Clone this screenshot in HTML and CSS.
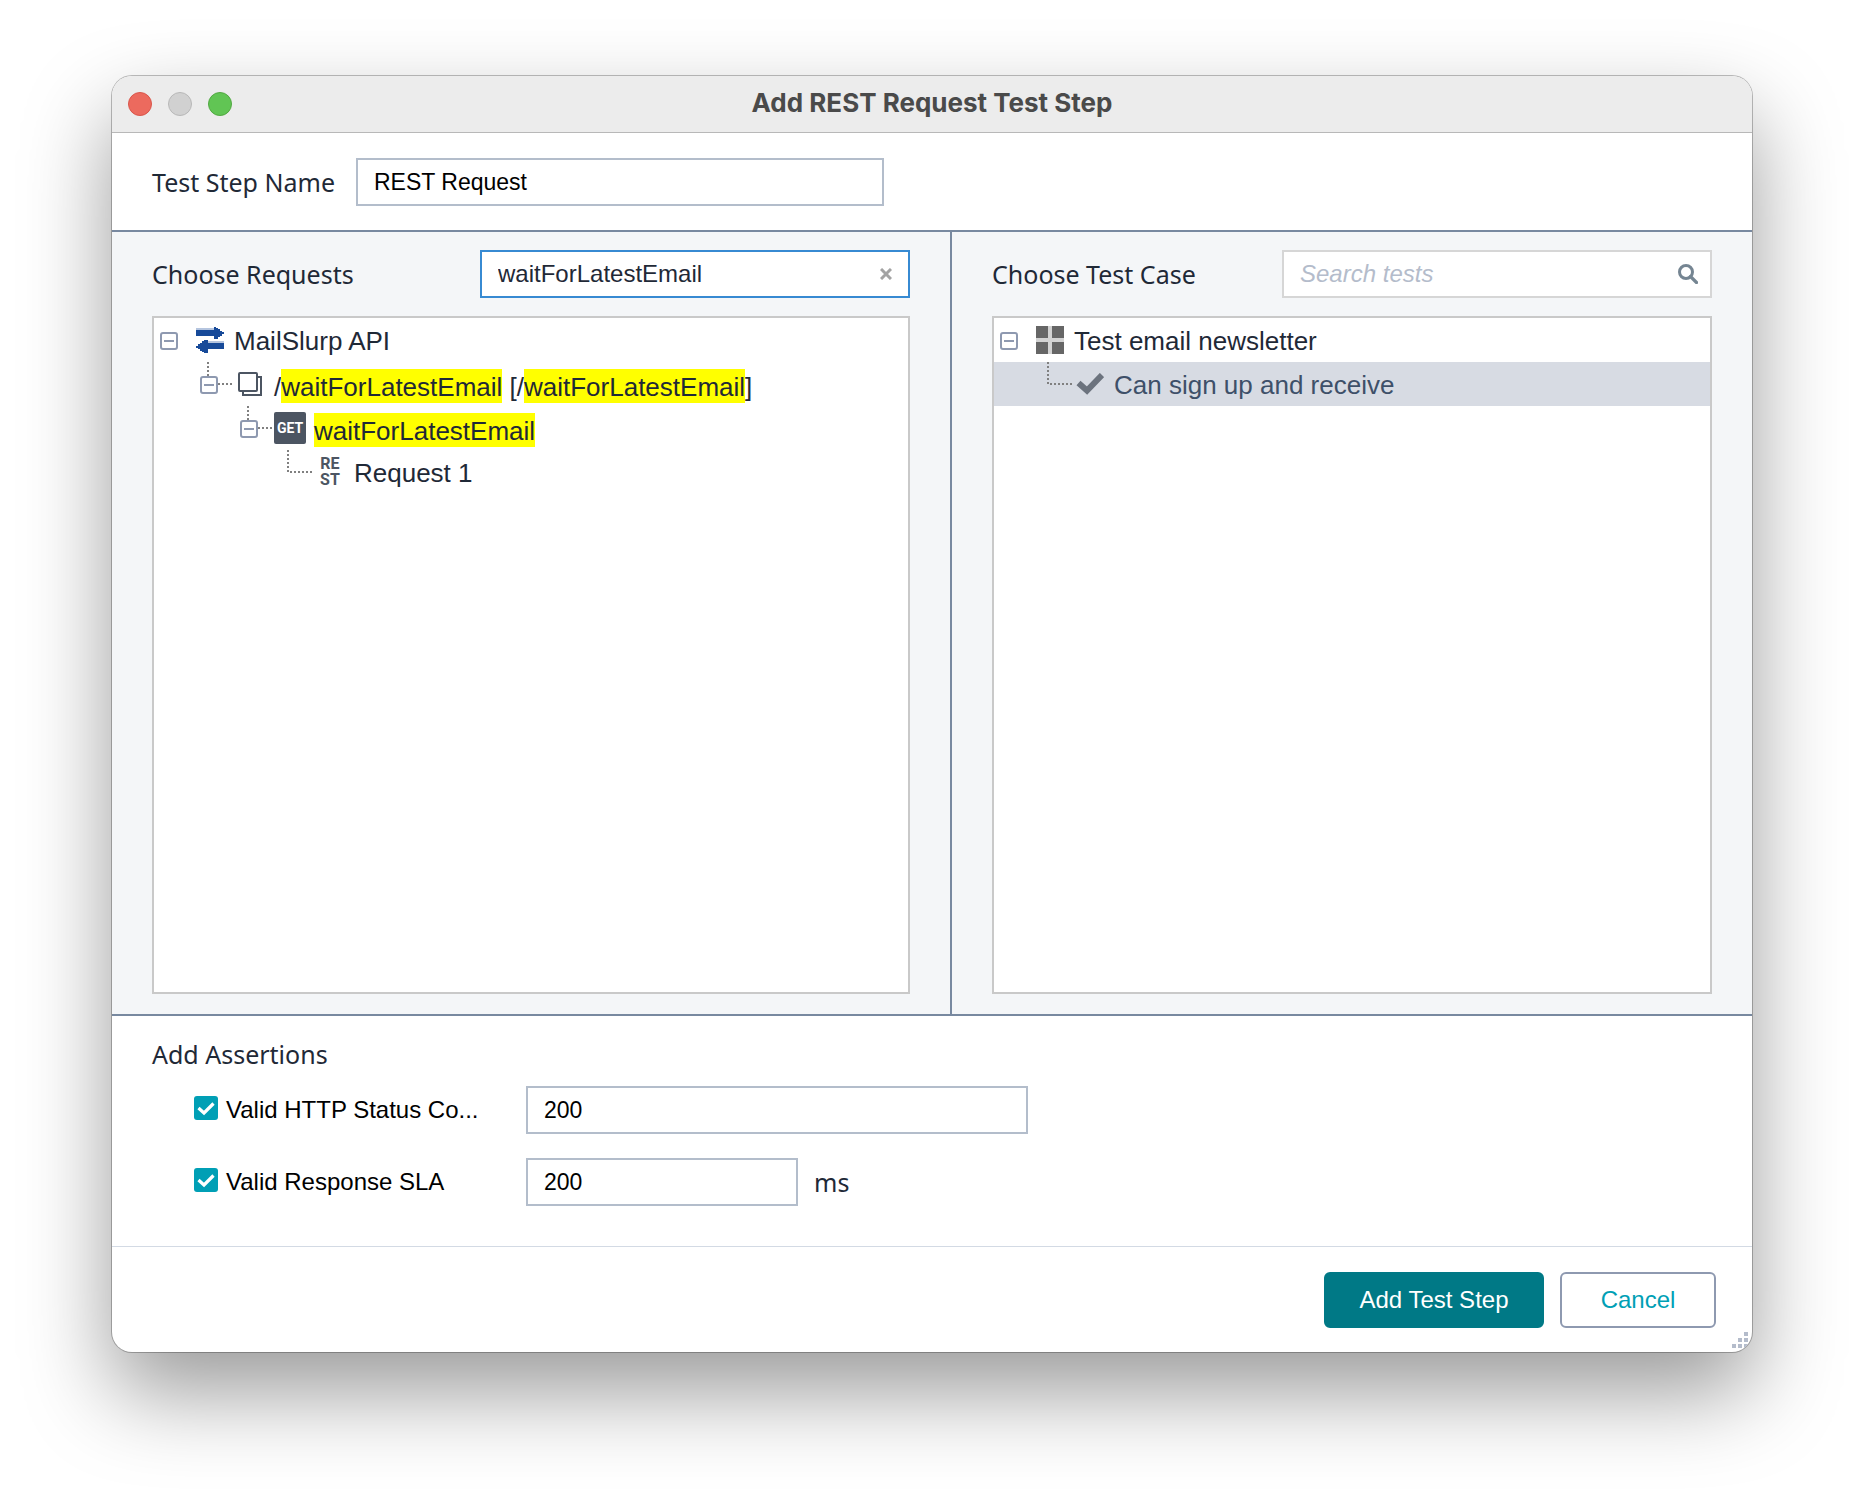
FILE: index.html
```html
<!DOCTYPE html>
<html lang="en">
<head>
<meta charset="utf-8">
<meta name="viewport" content="width=device-width, initial-scale=1">
<title>Add REST Request Test Step</title>
<link rel="stylesheet" href="styles.css">
</head>
<body>
<main class="window">
  <header class="titlebar">
    <div class="lights">
      <button class="light light-close" type="button" aria-label="Close"></button>
      <button class="light light-minimize" type="button" aria-label="Minimize" disabled></button>
      <button class="light light-zoom" type="button" aria-label="Zoom"></button>
    </div>
    <h1 class="title">Add REST Request Test Step</h1>
  </header>

  <form class="dialog">
    <section class="name-row">
      <label class="label label-name" for="step-name">Test Step Name</label>
      <input class="field field-name" id="step-name" type="text" value="REST Request">
    </section>

    <div class="panels">
      <section class="panel">
        <div class="panel-head">
          <label class="label" for="request-search">Choose Requests</label>
          <div class="search search-active">
            <input class="search-input" id="request-search" type="text" value="waitForLatestEmail">
            <button class="search-button" type="button" aria-label="Clear search">
              <svg class="icon-clear" viewBox="0 0 12 12"><path d="M1 1L11 11M11 1L1 11" stroke="#a3a3a3" stroke-width="3"/></svg>
            </button>
          </div>
        </div>
        <ul class="tree">
          <li class="node">
            <button class="toggle" type="button" aria-label="Collapse MailSlurp API">
              <svg viewBox="0 0 32 44"><rect x="1" y="15" width="16" height="16" rx="2" class="box"/><path d="M4 23H14" class="box"/></svg>
            </button>
            <span class="node-icon">
              <svg class="icon-arrows" viewBox="0 0 28 28"><path d="M0 3H18M10 16H28" stroke="#b5c5df" stroke-width="2"/><path d="M0 4H18V1H20V2H22V3H24V5H26V6H28V8H26V10H24V11H22V13H18V10H0ZM28 17H12V14H8V15H6V17H4V18H2V20H0V22H2V23H4V25H6V26H8V27H12V23H28Z" fill="#174a99"/></svg>
            </span>
            <span class="node-text">MailSlurp API</span>
          </li>
          <li class="node depth-1">
            <button class="toggle" type="button" aria-label="Collapse /waitForLatestEmail">
              <svg viewBox="0 0 32 44"><path d="M8 0V14M18 22H32" class="dots"/><rect x="1" y="15" width="16" height="16" rx="2" class="box"/><path d="M4 23H14" class="box"/></svg>
            </button>
            <span class="node-icon">
              <svg class="icon-pages" viewBox="0 0 24 24"><rect x="1" y="1" width="18" height="18" rx="1"/><path d="M20 5H23V23H5V20"/></svg>
            </span>
            <span class="node-text">/<mark>waitForLatestEmail</mark> [/<mark>waitForLatestEmail</mark>]</span>
          </li>
          <li class="node depth-2">
            <button class="toggle" type="button" aria-label="Collapse waitForLatestEmail">
              <svg viewBox="0 0 32 44"><path d="M8 0V14M18 22H32" class="dots"/><rect x="1" y="15" width="16" height="16" rx="2" class="box"/><path d="M4 23H14" class="box"/></svg>
            </button>
            <span class="node-icon"><span class="badge-get">GET</span></span>
            <span class="node-text"><mark>waitForLatestEmail</mark></span>
          </li>
          <li class="node depth-3">
            <span class="toggle">
              <svg viewBox="0 0 32 44"><path d="M8 0V22H32" class="dots"/></svg>
            </span>
            <span class="node-icon"><span class="badge-rest"><span>RE</span><span>ST</span></span></span>
            <span class="node-text">Request 1</span>
          </li>
        </ul>
      </section>

      <section class="panel panel-right">
        <div class="panel-head">
          <label class="label" for="test-search">Choose Test Case</label>
          <div class="search">
            <input class="search-input" id="test-search" type="text" placeholder="Search tests">
            <button class="search-button" type="button" aria-label="Search">
              <svg class="icon-search" viewBox="0 0 20 20"><circle cx="8" cy="8" r="6.5" fill="none" stroke="#758592" stroke-width="3"/><path d="M12.5 12.5L18.5 18.5" stroke="#758592" stroke-width="3.2" stroke-linecap="round"/></svg>
            </button>
          </div>
        </div>
        <ul class="tree">
          <li class="node">
            <button class="toggle" type="button" aria-label="Collapse Test email newsletter">
              <svg viewBox="0 0 32 44"><rect x="1" y="15" width="16" height="16" rx="2" class="box"/><path d="M4 23H14" class="box"/></svg>
            </button>
            <span class="node-icon">
              <svg class="icon-grid" viewBox="0 0 28 28"><path d="M0 0H28V28H0Z" fill="#d2d2d2"/><path d="M0 0H12V12H0ZM16 0H28V12H16ZM0 16H12V28H0ZM16 16H28V28H16Z" fill="#666"/></svg>
            </span>
            <span class="node-text">Test email newsletter</span>
          </li>
          <li class="node depth-1 node-selected">
            <span class="toggle">
              <svg viewBox="0 0 32 44"><path d="M8 0V22H32" class="dots"/></svg>
            </span>
            <span class="node-icon">
              <svg class="icon-check" viewBox="0 0 28 22"><path d="M2.500 10L11 17.500L26 2" fill="none" stroke="#6c737e" stroke-width="6"/></svg>
            </span>
            <span class="node-text">Can sign up and receive</span>
          </li>
        </ul>
      </section>
    </div>

    <section class="assertions">
      <h2 class="label">Add Assertions</h2>
      <div class="assertion">
        <label class="check"><input type="checkbox" checked>Valid HTTP Status Co...</label>
        <input class="field field-codes" type="text" value="200" aria-label="Valid HTTP status codes">
      </div>
      <div class="assertion">
        <label class="check"><input type="checkbox" checked>Valid Response SLA</label>
        <input class="field field-sla" id="sla" type="text" value="200" aria-label="Response SLA">
        <label class="label" for="sla">ms</label>
      </div>
    </section>

    <footer class="footer">
      <button class="button button-primary" type="submit">Add Test Step</button>
      <button class="button" type="button">Cancel</button>
    </footer>
  </form>
  <svg class="grip" viewBox="0 0 16 16"><path d="M12 0H16V4H12ZM6 6H10V10H6ZM12 6H16V10H12ZM0 12H4V16H0ZM6 12H10V16H6ZM12 12H16V16H12Z" fill="#b4bccb"/></svg>
</main>
</body>
</html>
```

FILE: styles.css
```css
*,
*::before,
*::after {
  box-sizing: border-box;
}

body {
  display: flex;
  min-height: 100vh;
  margin: 0;
  padding: 76px 112px 148px;
  background: #fff;
  color: #1f2937;
  font: 24px/32px "Liberation Sans", Arial, sans-serif;
}

button,
input {
  margin: 0;
  padding: 0;
  border: 0;
  background: none;
  color: inherit;
  font: inherit;
}

.window {
  position: relative;
  display: flex;
  flex: 1;
  flex-direction: column;
  min-width: 0;
  overflow: hidden;
  border-radius: 20px;
  background: #fff;
  box-shadow: 0 0 0 1px rgba(0, 0, 0, 0.25), 0 40px 88px rgba(0, 0, 0, 0.4);
}

/* Title bar */
.titlebar {
  display: grid;
  grid-template-columns: 1fr auto 1fr;
  align-items: center;
  height: 57px;
  padding: 0 16px;
  border-bottom: 1px solid #b8b8b8;
  background: #ececec;
}

.lights {
  display: flex;
  gap: 16px;
}

.light {
  width: 24px;
  height: 24px;
  border: 1px solid;
  border-radius: 50%;
}

.light-close {
  border-color: #d9564b;
  background: #ec6a5e;
}

.light-minimize {
  border-color: #b8b8b8;
  background: #d1d1d1;
}

.light-zoom {
  border-color: #52a842;
  background: #61c554;
}

.title {
  margin: 0 0 2px;
  color: #4a4a4a;
  font: 700 26px/54px Inter, sans-serif;
}

/* Form */
.dialog {
  display: flex;
  flex: 1;
  flex-direction: column;
}

.label {
  margin: 0;
  font: 400 25px/32px "Noto Sans", sans-serif;
  white-space: nowrap;
}

.label-name {
  width: 184px;
}

.name-row {
  display: flex;
  align-items: center;
  gap: 20px;
  padding: 25px 40px 24px;
  border-bottom: 2px solid #7889a0;
}

.field {
  height: 48px;
  padding: 0 16px;
  border: 2px solid #b3bdcb;
  background: #fff;
  color: #000;
  font-size: 23px;
}

.field-name {
  width: 528px;
}

/* Panels */
.panels {
  display: grid;
  flex: 1;
  grid-template-columns: minmax(0, 838fr) minmax(0, 802fr);
  border-bottom: 2px solid #7889a0;
  background: #f4f6f8;
}

.panel {
  display: flex;
  flex-direction: column;
  gap: 18px;
  padding: 18px 40px 20px;
}

.panel-right {
  border-left: 2px solid #7889a0;
}

.panel-head {
  display: flex;
  align-items: center;
  justify-content: space-between;
  gap: 20px;
}

.search {
  display: flex;
  align-items: center;
  width: 430px;
  height: 48px;
  border: 2px solid #d6d6d6;
  background: #fff;
}

.search-active {
  border-color: #378ad2;
}

.search-input {
  flex: 1;
  min-width: 0;
  height: 44px;
  padding: 0 16px;
  outline: 0;
}

.search-input::placeholder {
  color: #b4bccb;
  font-style: italic;
  opacity: 1;
}

.search-button {
  display: flex;
  align-items: center;
  justify-content: center;
  width: 44px;
  height: 44px;
}

.icon-clear {
  width: 12px;
  height: 12px;
}

.icon-search {
  width: 20px;
  height: 20px;
}

/* Tree */
.tree {
  flex: 1;
  margin: 0;
  padding: 0;
  border: 2px solid #c9c9c9;
  background: #fff;
  list-style: none;
}

.node {
  display: flex;
  align-items: center;
  height: 44px;
  padding-left: 6px;
}

.depth-1 {
  padding-left: 46px;
}

.depth-2 {
  padding-left: 86px;
}

.depth-3 {
  padding-left: 126px;
}

.node-selected {
  background: #d7dbe3;
  color: #3e5069;
}

.toggle {
  flex: none;
  width: 32px;
  height: 44px;
}

.toggle svg {
  display: block;
  width: 32px;
  height: 44px;
}

.box {
  fill: none;
  stroke: #8e99b0;
  stroke-width: 2;
}

.dots {
  fill: none;
  stroke: #808080;
  stroke-width: 2;
  stroke-dasharray: 2 2;
}

.node-icon {
  display: flex;
  flex: none;
  align-items: center;
  justify-content: center;
  width: 36px;
}

.icon-arrows,
.icon-grid {
  width: 28px;
  height: 28px;
}

.icon-pages {
  width: 24px;
  height: 24px;
  fill: none;
  stroke: #4c5562;
  stroke-width: 2;
}

.icon-check {
  width: 28px;
  height: 22px;
}

.badge-get {
  width: 32px;
  height: 32px;
  border-radius: 2px;
  background: #4c5562;
  color: #fff;
  font: 700 14px/32px Roboto, sans-serif;
  text-align: center;
}

.badge-rest {
  display: grid;
  color: #4c5562;
  font: 700 16px/16px Roboto, sans-serif;
  text-align: center;
}

.node-text {
  padding: 2px 0 0 6px;
  font-size: 26px;
  white-space: nowrap;
}

.node-text:has(mark) {
  padding-top: 6px;
}

mark {
  padding: 3px 0 1px;
  background: #ff0;
  color: inherit;
}

/* Assertions */
.assertions {
  display: grid;
  gap: 24px;
  padding: 22px 40px 40px;
}

.assertions h2 {
  margin-bottom: -8px;
}

.assertion {
  display: flex;
  align-items: center;
  gap: 16px;
  padding-left: 42px;
}

.check {
  display: flex;
  align-items: flex-start;
  gap: 8px;
  width: 316px;
  color: #000;
  white-space: nowrap;
}

.check input {
  flex: none;
  width: 24px;
  height: 24px;
  margin-top: 2px;
  border-radius: 3px;
  appearance: none;
  background: #fff;
}

.check input:checked {
  background: #009fb5 url("data:image/svg+xml,%3Csvg xmlns='http://www.w3.org/2000/svg' viewBox='0 0 24 24'%3E%3Cpath d='M4.500 12L10 17L19.500 7.500' fill='none' stroke='white' stroke-width='3.200'/%3E%3C/svg%3E") center / 24px;
}

.field-codes {
  width: 502px;
}

.field-sla {
  width: 272px;
}

/* Footer */
.footer {
  display: flex;
  justify-content: flex-end;
  gap: 16px;
  padding: 25px 36px 24px;
  border-top: 1px solid #d3dae4;
}

.button {
  min-width: 156px;
  height: 56px;
  border: 2px solid #8e99b0;
  border-radius: 6px;
  background: #fff;
  color: #009fb5;
}

.button-primary {
  min-width: 220px;
  border-color: #007986;
  background: #007986;
  color: #fff;
}

.grip {
  position: absolute;
  right: 4px;
  bottom: 4px;
  width: 16px;
  height: 16px;
}
```
